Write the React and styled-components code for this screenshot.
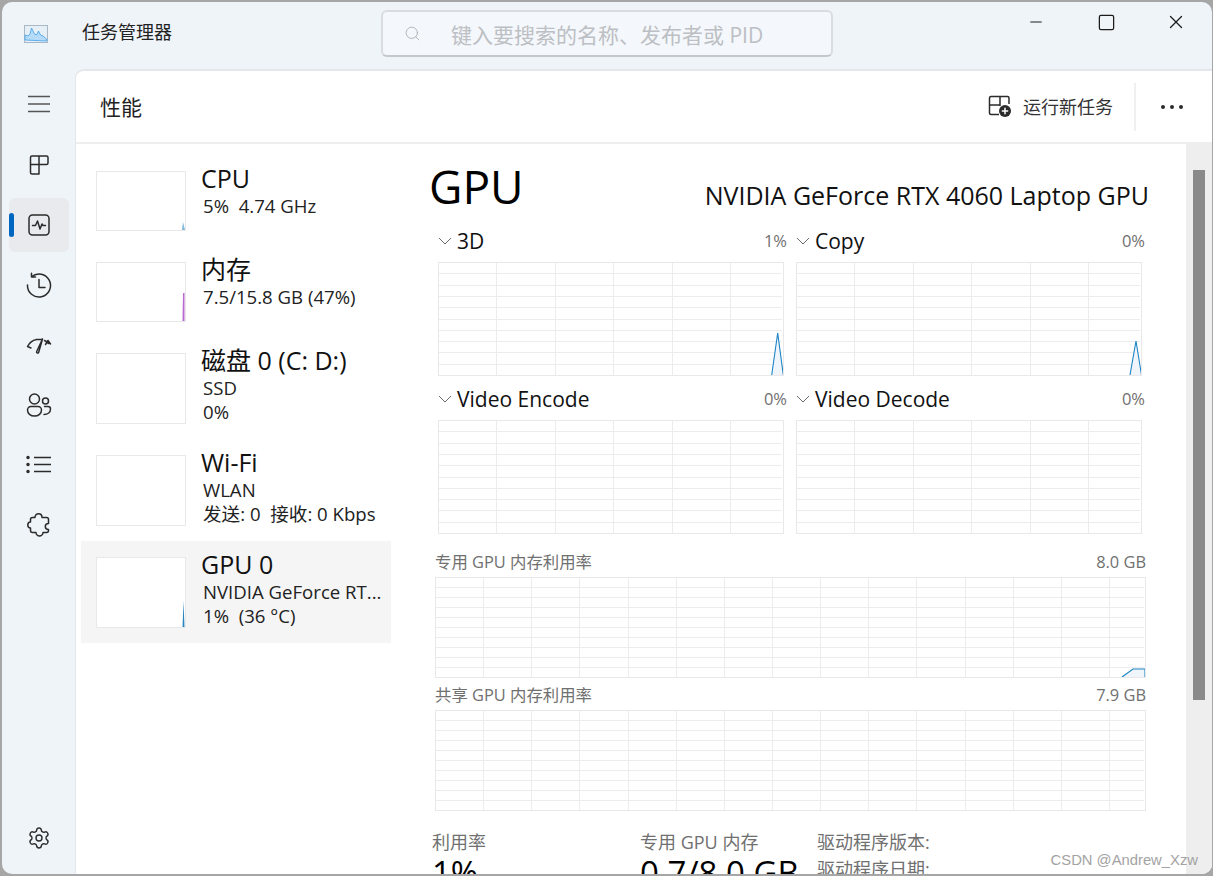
import React from "react";
import styled, { createGlobalStyle } from "styled-components";
import { Settings, Search, X, Minus, Square } from "lucide-react";

const FONT = `"Open Sans", "Noto Sans", "Noto Sans CJK SC", sans-serif`;

const GlobalStyle = createGlobalStyle`
  html, body {
    margin: 0;
    height: 876px;
    overflow: hidden;
    background: #a6a6a6;
    font-family: ${FONT};
    color: #1a1a1a;
  }
  * { box-sizing: border-box; }
`;

const Win = styled.div`
  position: relative;
  margin: 2px 1px 0 2px;
  height: 872px;
  background: #eff4f9;
  border-radius: 10px;
  overflow: hidden;
  display: grid;
  grid-template-columns: 73px 1fr;
  grid-template-rows: 67px 1fr;
`;

const TitleBar = styled.div`
  grid-column: 1 / 3;
  display: flex;
  align-items: center;
`;

const Logo = styled.svg`
  margin: -3px 0 0 22px;
  flex: none;
`;

const AppName = styled.div`
  margin-left: 34px;
  font-size: 18px;
  width: 299px;
  margin-top: -9px;
  color: #222;
`;

const SearchBox = styled.div`
  width: 452px;
  height: 47px;
  margin-top: -4px;
  background: #f4f7fb;
  border: 2px solid #d9dde1;
  border-bottom-color: #c4c8cc;
  border-radius: 6px;
  display: flex;
  align-items: center;
  padding-left: 21px;
  color: #bcbfc3;
  font-size: 21px;
  gap: 30px;
`;

const WinButtons = styled.div`
  margin-left: auto;
  display: flex;
  align-items: center;
  margin-top: -27px;
  padding-right: 1px;
`;

const WinButton = styled.div`
  width: 70px;
  display: flex;
  justify-content: center;
  color: #1c1c1c;
`;

const Sidebar = styled.div`
  display: flex;
  flex-direction: column;
  padding: 6px 0 6px 7px;
`;

const NavItem = styled.div`
  position: relative;
  width: 60px;
  height: 54px;
  margin: 3px 0;
  border-radius: 6px;
  display: flex;
  align-items: center;
  justify-content: center;
  background: ${(p) => (p.$active ? "#e8eaee" : "transparent")};
  margin-top: ${(p) => (p.$bottom ? "auto" : "3px")};
  color: #2b2b2b;
`;

const Pill = styled.span`
  position: absolute;
  left: 0;
  top: 15px;
  width: 5px;
  height: 24px;
  border-radius: 3px;
  background: #0067c0;
`;

const Panel = styled.div`
  background: #fff;
  border-left: 1px solid #e3e7eb;
  border-top: 2px solid #e3e7eb;
  border-top-left-radius: 9px;
  display: flex;
  flex-direction: column;
  overflow: hidden;
`;

const Header = styled.div`
  height: 73px;
  flex: none;
  border-bottom: 2px solid #eeeeee;
  display: flex;
  align-items: center;
  padding-left: 24px;
`;

const PageTitle = styled.div`
  font-size: 21px;
  margin-top: -1px;
  color: #222;
`;

const HeaderAction = styled.div`
  margin-left: auto;
  margin-top: -2px;
  display: flex;
  align-items: center;
  gap: 11px;
  font-size: 18px;
  color: #333;
`;

const Divider = styled.div`
  width: 2px;
  height: 48px;
  background: #f0f0f0;
  margin: 0 24px 0 21px;
`;

const MoreDots = styled.svg`
  margin-right: 28px;
  flex: none;
`;

const Body = styled.div`
  flex: 1;
  min-height: 0;
  display: flex;
`;

const DeviceList = styled.div`
  width: 315px;
  flex: none;
  padding: 11px 0 0 5px;
`;

const DeviceRow = styled.div`
  display: flex;
  height: ${(p) => (p.$tall ? "102px" : "91px")};
  padding: 16px 0 0 15px;
  background: ${(p) => (p.$active ? "#f5f5f5" : "transparent")};
`;

const Thumb = styled.svg`
  flex: none;
  display: block;
  background: #fff;
  border: 1px solid #e8e8e8;
`;

const DeviceText = styled.div`
  margin: -8px 0 0 15px;
  min-width: 0;
`;

const DeviceName = styled.div`
  font-size: 25px;
  line-height: 30px;
  margin-bottom: 1px;
  white-space: nowrap;
  color: #111;
`;

const DeviceSub = styled.div`
  margin-left: 2px;
  font-size: 18.6px;
  line-height: 24px;
  white-space: pre;
  color: #222;
`;

const Main = styled.div`
  flex: 1;
  min-width: 0;
  padding: 13px 0 0 39px;
`;

const GpuHead = styled.div`
  display: flex;
  justify-content: space-between;
  align-items: baseline;
  width: 719px;
  height: 61px;
`;

const GpuTitle = styled.div`
  font-size: 46px;
  line-height: 60px;
  margin: -1px 0 0 -1px;
  color: #000;
`;

const GpuModel = styled.div`
  font-size: 25px;
  position: relative;
  top: 1px;
  color: #111;
`;

const EngineGrid = styled.div`
  display: grid;
  grid-template-columns: 350px 350px;
  column-gap: 8px;
  margin: 7px 0 0 8px;
  row-gap: 7px;
`;

const EngineHead = styled.div`
  display: flex;
  align-items: center;
  height: 31px;
  margin-bottom: 6px;
`;

const EngineName = styled.span`
  font-size: 21px;
  margin-left: 5px;
  color: #111;
`;

const Percent = styled.span`
  margin-left: auto;
  padding-right: 1px;
  font-size: 16.5px;
  color: #707070;
`;

const ChartSvg = styled.svg`
  display: block;
`;

const MemBlock = styled.div`
  margin: ${(p) => (p.$first ? "13px" : "2px")} 0 0 5px;
  width: 711px;
`;

const MemHead = styled.div`
  display: flex;
  justify-content: space-between;
  height: 30px;
  padding-bottom: 2px;
  align-items: center;
  font-size: 16.4px;
  color: #707070;
`;

const Stats = styled.div`
  display: flex;
  margin: 18px 0 0 2px;
`;

const StatCol = styled.div`
  width: ${(p) => p.$w}px;
  flex: none;
`;

const StatLabel = styled.div`
  font-size: 18px;
  line-height: 27px;
  color: #707070;
  white-space: nowrap;
`;

const StatValue = styled.div`
  font-size: 33px;
  line-height: 36px;
  margin-top: -1px;
  color: #000;
  white-space: nowrap;
`;

const ScrollTrack = styled.div`
  width: 26px;
  flex: none;
  background: #eeeeee;
  padding: 26px 0 0 7px;
`;

const ScrollThumb = styled.div`
  width: 12px;
  height: 530px;
  background: #8a8a8a;
`;

const Watermark = styled.div`
  position: absolute;
  right: 14px;
  bottom: 6px;
  font-family: "Liberation Sans", sans-serif;
  font-size: 14.8px;
  color: #a3a3a3;
`;

// line graph with grid; the peak is given in chart coordinates
function Chart({ w, h, cols, step, rows = 10, spike }) {
  const lines = [];
  for (let i = 1; i < cols; i++) {
    const x = Math.round(i * step) + 0.5;
    lines.push(<line key={"v" + i} x1={x} x2={x} y1={0} y2={h} />);
  }
  for (let i = 1; i < rows; i++) {
    const y = Math.round((i * (h - 1)) / rows) + 0.5;
    lines.push(<line key={"h" + i} x1={0} x2={w - 2} y1={y} y2={y} />);
  }
  return (
    <ChartSvg width={w} height={h} viewBox={`0 0 ${w} ${h}`}>
      <g stroke="#ececec" strokeWidth="1" shapeRendering="crispEdges">
        {lines}
      </g>
      {spike && (
        <>
          <polygon points={spike} fill="#f0f5fb" />
          <polyline points={spike} fill="none" stroke="#1b84c4" strokeWidth="1.1" />
        </>
      )}
      <rect x="0.5" y="0.5" width={w - 1} height={h - 1} fill="none" stroke="#e8e8e8" shapeRendering="crispEdges" />
    </ChartSvg>
  );
}

function Chevron() {
  return (
    <svg width="14" height="8" viewBox="0 0 14 8" fill="none" stroke="#6a6a6a" strokeWidth="1">
      <path d="M1 1l6 6 6-6" />
    </svg>
  );
}

function Engine({ name, value, spike }) {
  return (
    <div>
      <EngineHead>
        <Chevron />
        <EngineName>{name}</EngineName>
        <Percent>{value}</Percent>
      </EngineHead>
      <Chart w={346} h={114} cols={6} step={58.4} spike={spike} />
    </div>
  );
}

function Mem({ label, value, first, spike }) {
  return (
    <MemBlock $first={first}>
      <MemHead>
        <span>{label}</span>
        <span>{value}</span>
      </MemHead>
      <Chart w={711} h={101} cols={15} step={48.14} spike={spike} />
    </MemBlock>
  );
}

function Device({ name, lines, tall, active, spark, color }) {
  const h = tall ? 71 : 60;
  return (
    <DeviceRow $tall={tall} $active={active}>
      <Thumb width="90" height={h} viewBox={`0 0 88 ${h - 2}`}>
        {spark && <polygon points={spark} fill={color} />}
      </Thumb>
      <DeviceText>
        <DeviceName>{name}</DeviceName>
        {lines.map((l) => (
          <DeviceSub key={l}>{l}</DeviceSub>
        ))}
      </DeviceText>
    </DeviceRow>
  );
}

const stroke = { fill: "none", stroke: "currentColor", strokeWidth: 1.5, strokeLinecap: "round", strokeLinejoin: "round" };

const navIcons = [
  <svg key="menu" width="24" height="24" viewBox="0 0 24 24" stroke="#555" strokeWidth="1.6">
    <path d="M1 3.500h22M1 11h22M1 18.500h22" />
  </svg>,
  <svg key="apps" width="24" height="24" viewBox="0 0 24 24" {...stroke}>
    <path d="M3.500 11.500V4.500A1.500 1.500 0 0 1 5 3h7v8.500zM12 3h7.500A1.500 1.500 0 0 1 21 4.500v5.500a1.500 1.500 0 0 1-1.500 1.500H12zM3.500 11.500H12v9.500H5a1.500 1.500 0 0 1-1.500-1.500z" />
  </svg>,
  <svg key="perf" width="24" height="24" viewBox="0 0 24 24" {...stroke}>
    <rect x="2" y="2" width="20" height="20" rx="3.500" />
    <path d="M5.500 12.500h3l2-4.500 2.500 8 2-5 1 1.500h2.500" />
  </svg>,
  <svg key="history" width="26" height="26" viewBox="0 0 26 26" {...stroke}>
    <path d="M5.500 4.800A11.500 11.500 0 1 1 1.500 13M5.500 1.200v3.900h4M13 7.500v8h6" />
  </svg>,
  <svg key="startup" width="26" height="26" viewBox="0 0 26 26" {...stroke}>
    <path d="M1.500 14.500C3.500 10.500 6.500 8.300 10.500 7.500M10 7.500h6M18.500 8.500c1.500.700 2.800 1.700 4 3M1.500 14.500l3.500 1.500M22 8.500l-2.500 4M22 8.500l2.500 3.500" />
    <path d="M16.500 7l-5.800 12.500c-.5 1.300 1 2.200 1.900 1z" />
  </svg>,
  <svg key="users" width="26" height="26" viewBox="0 0 26 26" {...stroke}>
    <circle cx="8.500" cy="7" r="5" />
    <circle cx="19.500" cy="9" r="3" />
    <path d="M1.500 18a3.500 3.500 0 0 1 3.500-3.500h7A3.500 3.500 0 0 1 15.500 18c0 3.500-3 6-7 6s-7-2.500-7-6zM18.500 14.500h3.500a2.500 2.500 0 0 1 2.500 2.500c0 3.200-2.700 5.500-6.500 5.500" />
  </svg>,
  <svg key="details" width="26" height="26" viewBox="0 0 26 26" stroke="#2b2b2b" strokeWidth="1.500" fill="#2b2b2b">
    <path d="M8 5.500h17M8 12.500h17M8 19.500h17" fill="none" />
    <circle cx="2" cy="5.500" r="1" />
    <circle cx="2" cy="12.500" r="1" />
    <circle cx="2" cy="19.500" r="1" />
  </svg>,
  <svg key="services" width="26" height="26" viewBox="0 0 26 26" {...stroke}>
    <path d="M9 5.500C9 3 10.500 1.800 12.500 1.800S16 3 16 5.500h4.500a2 2 0 0 1 2 2v4c-2 0-3.200 1.300-3.200 3s1.200 3 3.200 3v1a2 2 0 0 1-2 2H17c0 2-1.800 3.500-3.500 3.500S10 22.500 10 20.500H6.500a2 2 0 0 1-2-2V16C2.500 16 1.800 14.500 1.800 13s1-3 2.700-3V7.500a2 2 0 0 1 2-2z" />
  </svg>,
];

export default function App() {
  return (
    <>
      <GlobalStyle />
      <Win>
        <TitleBar>
          <Logo width="24" height="18" viewBox="0 0 24 18">
            <rect x="0.500" y="0.500" width="23" height="17" fill="#e6eef6" stroke="#a9b8c6" />
            <path d="M1 15V10l3 1 2-2 1.500-6 3 6 2 1 2-4 2 4 2.500 1 3.500 3v2z" fill="#b5dbf8" stroke="#4fa8ec" strokeWidth="0.9" />
          </Logo>
          <AppName>任务管理器</AppName>
          <SearchBox>
            <Search size={17} strokeWidth={1.2} color="#a8abaf" />
            <span>键入要搜索的名称、发布者或 PID</span>
          </SearchBox>
          <WinButtons>
            <WinButton>
              <Minus size={18} strokeWidth={1.5} />
            </WinButton>
            <WinButton>
              <Square size={19} strokeWidth={1.6} />
            </WinButton>
            <WinButton>
              <X size={22} strokeWidth={1.4} />
            </WinButton>
          </WinButtons>
        </TitleBar>

        <Sidebar>
          {navIcons.map((icon, i) => (
            <NavItem key={i} $active={i === 2}>
              {i === 2 && <Pill />}
              {icon}
            </NavItem>
          ))}
          <NavItem $bottom>
            <Settings size={24} strokeWidth={1.4} />
          </NavItem>
        </Sidebar>

        <Panel>
          <Header>
            <PageTitle>性能</PageTitle>
            <HeaderAction>
              <svg width="24" height="24" viewBox="0 0 24 24" fill="none" stroke="#2b2b2b" strokeWidth="1.500">
                <path d="M12 12V2.500H3a1.500 1.500 0 0 0-1.500 1.500v7H12M11 2.500h8.500A1.500 1.500 0 0 1 21 4v6M1.500 11v8A1.500 1.500 0 0 0 3 20.500h8" />
                <circle cx="17" cy="17" r="6" fill="#2b2b2b" stroke="none" />
                <path d="M17 13.800v6.400M13.800 17h6.400" stroke="#fff" strokeWidth="1.500" />
              </svg>
              运行新任务
            </HeaderAction>
            <Divider />
            <MoreDots width="24" height="6" viewBox="0 0 24 6" fill="#2b2b2b">
              <circle cx="3" cy="3" r="2" />
              <circle cx="12" cy="3" r="2" />
              <circle cx="21" cy="3" r="2" />
            </MoreDots>
          </Header>

          <Body>
            <DeviceList>
              <Device name="CPU" lines={["5%  4.74 GHz"]} spark="85,58 86,50 88,58" color="#7fb8dc" />
              <Device name="内存" lines={["7.5/15.8 GB (47%)"]} spark="85.500,58 86,30 87.500,30 87.500,58" color="#b96ad2" />
              <Device tall name="磁盘 0 (C: D:)" lines={["SSD", "0%"]} />
              <Device tall name="Wi-Fi" lines={["WLAN", "发送: 0  接收: 0 Kbps"]} />
              <Device tall active name="GPU 0" lines={["NVIDIA GeForce RT...", "1%  (36 °C)"]} spark="85.500,69 86.500,43 87.500,69" color="#2a85c0" />
            </DeviceList>

            <Main>
              <GpuHead>
                <GpuTitle>GPU</GpuTitle>
                <GpuModel>NVIDIA GeForce RTX 4060 Laptop GPU</GpuModel>
              </GpuHead>
              <EngineGrid>
                <Engine name="3D" value="1%" spike="333.700,113 339.700,71 345.300,113" />
                <Engine name="Copy" value="0%" spike="334,113 340,79 345.500,113" />
                <Engine name="Video Encode" value="0%" />
                <Engine name="Video Decode" value="0%" />
              </EngineGrid>
              <Mem first label="专用 GPU 内存利用率" value="8.0 GB" spike="687,100 698,92 710,92 710,100" />
              <Mem label="共享 GPU 内存利用率" value="7.9 GB" />
              <Stats>
                <StatCol $w={208}>
                  <StatLabel>利用率</StatLabel>
                  <StatValue>1%</StatValue>
                </StatCol>
                <StatCol $w={177}>
                  <StatLabel>专用 GPU 内存</StatLabel>
                  <StatValue>0.7/8.0 GB</StatValue>
                </StatCol>
                <StatCol $w={200}>
                  <StatLabel>驱动程序版本:</StatLabel>
                  <StatLabel>驱动程序日期:</StatLabel>
                </StatCol>
              </Stats>
            </Main>

            <ScrollTrack>
              <ScrollThumb />
            </ScrollTrack>
          </Body>
        </Panel>
        <Watermark>CSDN @Andrew_Xzw</Watermark>
      </Win>
    </>
  );
}
